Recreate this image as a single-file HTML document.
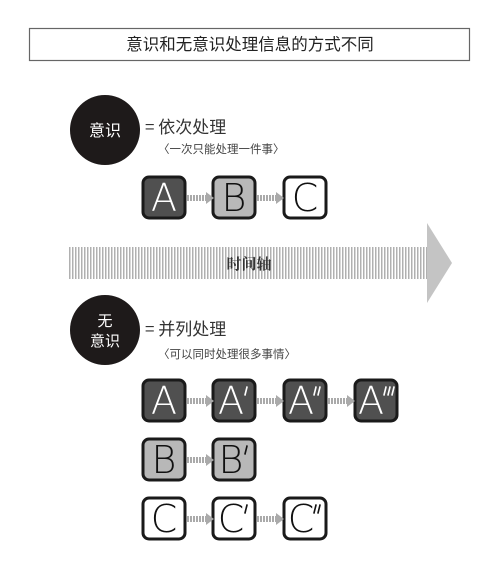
<!DOCTYPE html>
<html><head><meta charset="utf-8"><style>
body{margin:0;background:#fff;width:500px;height:560px;overflow:hidden}
svg text{font-family:"Liberation Sans","Noto Sans CJK SC",sans-serif}
.L{font-family:'DejaVu Sans ExtraLight','DejaVu Sans Light','DejaVu Sans','Liberation Sans',sans-serif;font-weight:200}
</style></head><body>
<svg width="500" height="560" viewBox="0 0 500 560" xmlns="http://www.w3.org/2000/svg">
<defs>
<pattern id="st" width="3" height="10" patternUnits="userSpaceOnUse"><rect width="1.5" height="10" fill="#b0b0b0"/></pattern>
<g id="con"><rect x="0" y="-3" width="20" height="6" fill="url(#dd)"/><path d="M19 -6 L27 0 L19 6Z" fill="#aaa"/></g>
<pattern id="dd" width="3" height="6" patternUnits="userSpaceOnUse"><rect width="2" height="6" fill="#aaa"/></pattern>
</defs>
<rect x="29.5" y="28.5" width="440" height="32" fill="#fff" stroke="#666" stroke-width="1.2"/>
<text x="250" y="50" text-anchor="middle" font-size="16.5" fill="#222" style="font-family:'Noto Sans CJK SC',sans-serif">意识和无意识处理信息的方式不同</text>

<circle cx="105" cy="130" r="35" fill="#1e1a1a"/>
<text x="105" y="136" text-anchor="middle" font-size="16" fill="#fff" style="font-family:'Noto Sans CJK SC',sans-serif">意识</text>
<text x="145" y="133" font-size="17" fill="#333" style="font-family:'Noto Sans CJK SC',sans-serif">= 依次处理</text>
<text x="158" y="153" font-size="11.5" fill="#444" style="font-family:'Noto Sans CJK SC',sans-serif">〈一次只能处理一件事〉</text>

<g stroke="#1a1a1a" stroke-width="3">
<rect x="143" y="177" width="42" height="41" rx="6" fill="#505050"/>
<rect x="213" y="177" width="42" height="41" rx="6" fill="#b8b8b8"/>
<rect x="284" y="177" width="42" height="41" rx="6" fill="#fff"/>
</g>
<g font-size="38" text-anchor="middle" class="L">
<text x="164" y="211" fill="#fff" class="L">A</text><text x="234" y="211" fill="#111" class="L">B</text><text x="305" y="211" fill="#111" class="L">C</text>
</g>
<use href="#con" x="187" y="198"/><use href="#con" x="257" y="198"/>

<rect x="68" y="247" width="360" height="32" fill="url(#st)"/>
<path d="M427 223 L452 263 L427 303Z" fill="#c4c4c4"/>
<text x="249" y="269" text-anchor="middle" font-size="15" font-weight="bold" fill="#333" style="font-family:'Noto Serif CJK SC',serif">时间轴</text>

<circle cx="105" cy="330" r="35" fill="#1e1a1a"/>
<text x="105" y="326" text-anchor="middle" font-size="15" fill="#fff" style="font-family:'Noto Sans CJK SC',sans-serif">无</text>
<text x="105" y="346" text-anchor="middle" font-size="15" fill="#fff" style="font-family:'Noto Sans CJK SC',sans-serif">意识</text>
<text x="145" y="335" font-size="17" fill="#333" style="font-family:'Noto Sans CJK SC',sans-serif">= 并列处理</text>
<text x="158" y="358" font-size="11.5" fill="#444" style="font-family:'Noto Sans CJK SC',sans-serif">〈可以同时处理很多事情〉</text>

<g stroke="#1a1a1a" stroke-width="3">
<rect x="143" y="380" width="42" height="41" rx="6" fill="#505050"/>
<rect x="213" y="380" width="42" height="41" rx="6" fill="#505050"/>
<rect x="284" y="380" width="42" height="41" rx="6" fill="#505050"/>
<rect x="355" y="380" width="42" height="41" rx="6" fill="#505050"/>
<rect x="143" y="439" width="42" height="41" rx="6" fill="#b8b8b8"/>
<rect x="213" y="439" width="42" height="41" rx="6" fill="#b8b8b8"/>
<rect x="143" y="498" width="42" height="41" rx="6" fill="#fff"/>
<rect x="213" y="498" width="42" height="41" rx="6" fill="#fff"/>
<rect x="284" y="498" width="42" height="41" rx="6" fill="#fff"/>
</g>
<g font-size="38" text-anchor="middle">
<text x="164" y="414" fill="#fff" class="L">A</text><text x="231" y="414" fill="#fff" class="L">A</text><text x="301" y="414" fill="#fff" class="L">A</text><text x="371" y="414" fill="#fff" class="L">A</text>
<text x="164" y="473" fill="#111" class="L">B</text><text x="231" y="473" fill="#111" class="L">B</text>
<text x="164" y="532" fill="#111" class="L">C</text><text x="231" y="532" fill="#111" class="L">C</text><text x="301" y="532" fill="#111" class="L">C</text>
</g>
<g stroke-width="1.6" stroke-linecap="round">
<path d="M247 387 L245 395" stroke="#fff"/>
<path d="M316 387 L314 395 M320 387 L318 395" stroke="#fff"/>
<path d="M386 387 L384 395 M390 387 L388 395 M394 387 L392 395" stroke="#fff"/>
<path d="M247 446 L245 454" stroke="#111"/>
<path d="M247 505 L245 513" stroke="#111"/>
<path d="M316 505 L314 513 M320 505 L318 513" stroke="#111"/>
</g>
<use href="#con" x="187" y="401"/><use href="#con" x="257" y="401"/><use href="#con" x="328" y="401"/>
<use href="#con" x="187" y="460"/>
<use href="#con" x="187" y="519"/><use href="#con" x="257" y="519"/>
</svg>
</body></html>
